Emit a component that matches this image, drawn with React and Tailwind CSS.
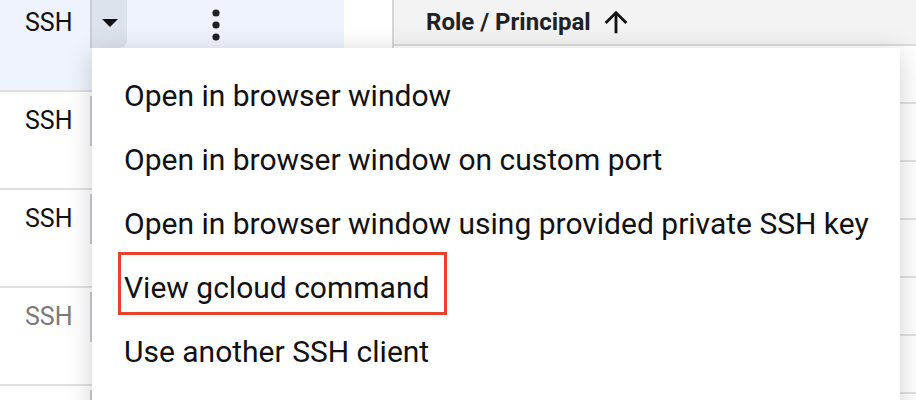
import React from "react";

const menuItems = [
  "Open in browser window",
  "Open in browser window on custom port",
  "Open in browser window using provided private SSH key",
  "View gcloud command",
  "Use another SSH client",
];

const Kebab = () => (
  <svg width="8" height="32" viewBox="0 0 8 32" className="text-[#202124]">
    <circle cx="4" cy="4" r="3.6" fill="currentColor" />
    <circle cx="4" cy="16" r="3.6" fill="currentColor" />
    <circle cx="4" cy="28" r="3.6" fill="currentColor" />
  </svg>
);

const ArrowUp = () => (
  <svg width="34" height="34" viewBox="0 0 24 24" fill="currentColor">
    <path d="M4 12l1.41 1.41L11 7.83V20h2V7.83l5.58 5.59L20 12l-8-8-8 8z" />
  </svg>
);

const SshRow = ({ active, disabled, empty }) => (
  <div
    className={`flex h-[98px] border-b-2 border-[#e0e0e0] ${active ? "bg-[#eef3fd]" : "bg-white"}`}
  >
    <div className="flex w-[344px] items-start pt-1">
      <div className="flex h-[50px] items-stretch">
        <div
          className={`flex w-[90px] items-center pl-[25px] text-[25px] ${disabled ? "text-[#7a7a7a]" : "text-[#111]"}`}
        >
          {!empty && "SSH"}
        </div>
        <div
          className={`flex w-[37px] items-center justify-center border-l-2 border-[#c9ccd1] rounded-br-lg ${active ? "bg-[#dde3ec]" : ""}`}
        >
          <svg width="16" height="8" viewBox="0 0 16 8">
            <path d="M0 0h16L8 8z" fill="#111" />
          </svg>
        </div>
        <div className="ml-[85px] flex items-center pt-1">
          <Kebab />
        </div>
      </div>
    </div>
    <div className={`w-[48px] ${active ? "bg-white" : ""}`} />
  </div>
);

export default function App() {
  return (
    <div
      className="relative h-[400px] w-[916px] overflow-hidden bg-white"
      style={{ fontFamily: "Roboto, 'Liberation Sans', sans-serif" }}
    >
      <div className="flex h-full">
        <div className="-mt-[6px] w-[392px]">
          <SshRow active />
          <SshRow />
          <SshRow />
          <SshRow disabled />
          <SshRow empty />
        </div>
        <div className="flex-1 border-l-2 border-[#d6d6d6]">
          <div className="flex h-[46px] items-center border-b-2 border-[#dcdcdc] bg-[#f3f3f3] pl-[32px]">
            <span className="text-[24px] font-bold text-[#202124]">Role / Principal</span>
            <span className="ml-[8px] text-[#111]">
              <ArrowUp />
            </span>
          </div>
          {[0, 1, 2, 3, 4, 5].map((i) => (
            <div key={i} className="h-[58px] border-b-2 border-[#e0e0e0]" />
          ))}
        </div>
      </div>

      <div className="absolute left-[92px] top-[48px] w-[808px] bg-white pt-[15px] pb-10 shadow-[0_4px_24px_rgba(0,0,0,0.18)]">
        {menuItems.map((item, i) => (
          <div
            key={item}
            className="relative flex h-[64px] items-center pl-[32px] text-[30px] text-[#111]"
          >
            {item}
            {i === 3 && (
              <div className="absolute left-[26px] top-[-3px] h-[63px] w-[329px] border-[3px] border-[#e8412c]" />
            )}
          </div>
        ))}
      </div>
    </div>
  );
}
